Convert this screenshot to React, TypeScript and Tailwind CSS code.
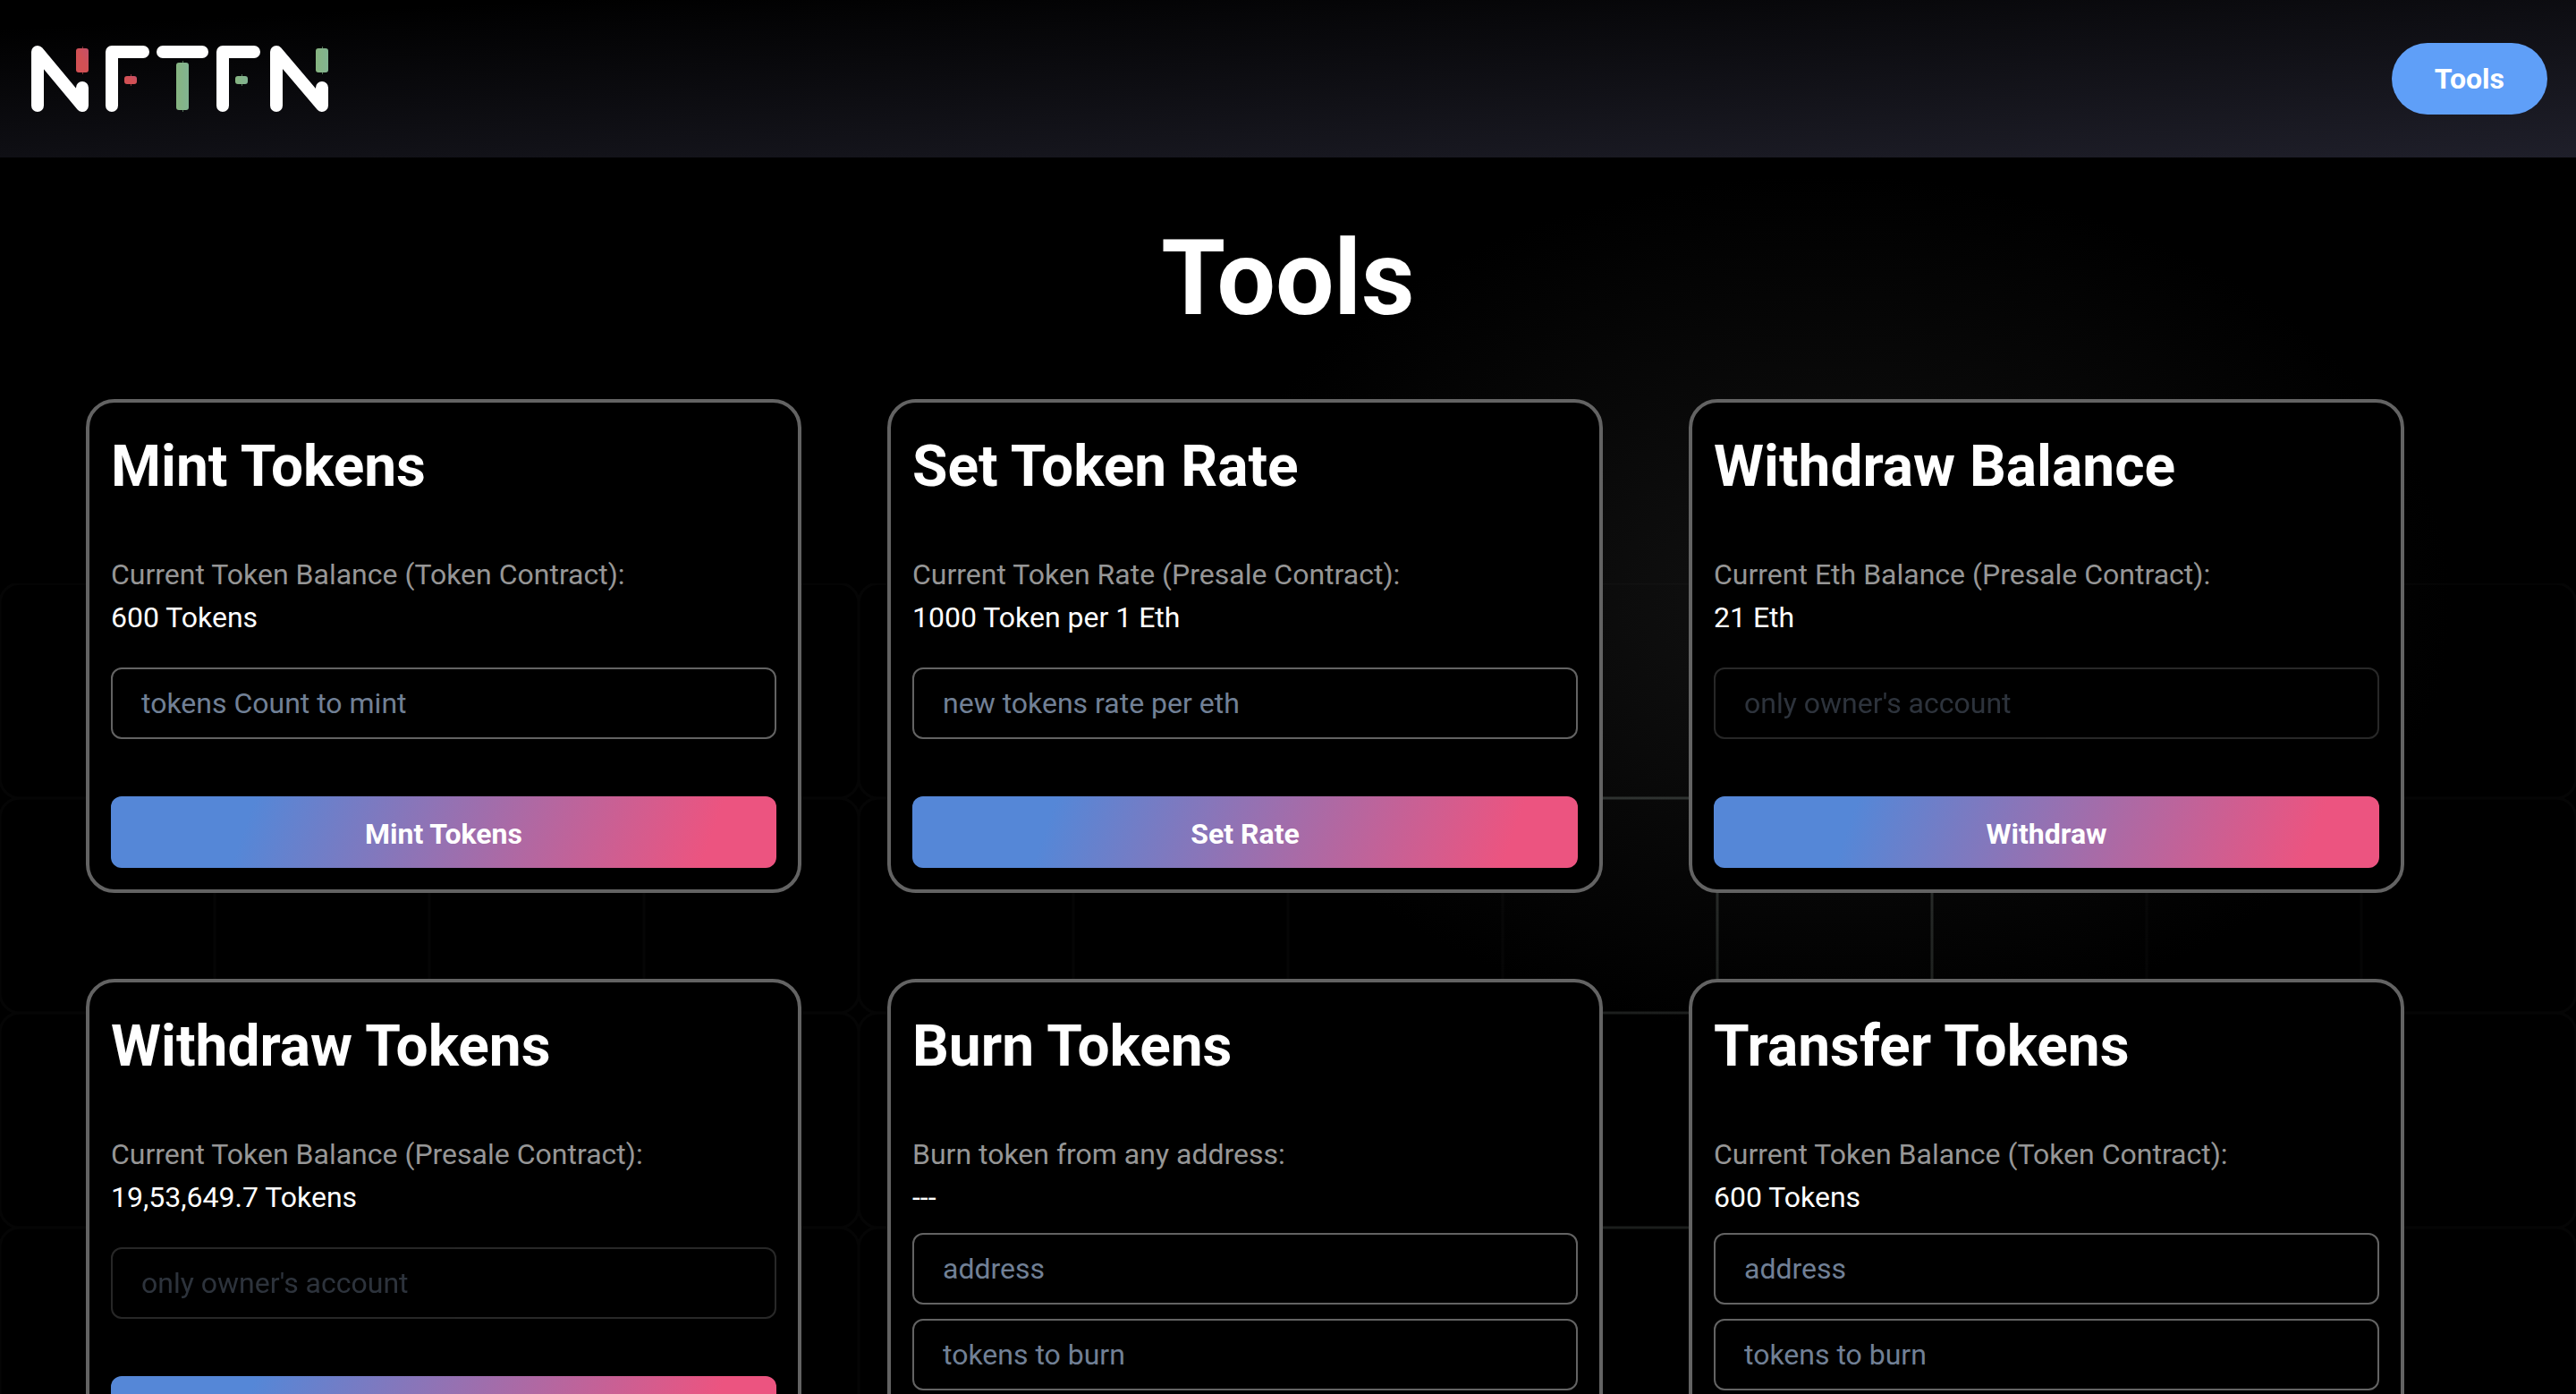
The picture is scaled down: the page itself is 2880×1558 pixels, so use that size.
import type { ReactNode } from "react";

type Field = { id: string; placeholder: string; disabled?: boolean };
type Tool = {
  title: string;
  label: string;
  value: string;
  fields: Field[];
  action: string;
};

const tools: Tool[] = [
  {
    title: "Mint Tokens",
    label: "Current Token Balance (Token Contract):",
    value: "600 Tokens",
    fields: [{ id: "mint-count", placeholder: "tokens Count to mint" }],
    action: "Mint Tokens",
  },
  {
    title: "Set Token Rate",
    label: "Current Token Rate (Presale Contract):",
    value: "1000 Token per 1 Eth",
    fields: [{ id: "token-rate", placeholder: "new tokens rate per eth" }],
    action: "Set Rate",
  },
  {
    title: "Withdraw Balance",
    label: "Current Eth Balance (Presale Contract):",
    value: "21 Eth",
    fields: [{ id: "withdraw-balance", placeholder: "only owner's account", disabled: true }],
    action: "Withdraw",
  },
  {
    title: "Withdraw Tokens",
    label: "Current Token Balance (Presale Contract):",
    value: "19,53,649.7 Tokens",
    fields: [{ id: "withdraw-tokens", placeholder: "only owner's account", disabled: true }],
    action: "Withdraw",
  },
  {
    title: "Burn Tokens",
    label: "Burn token from any address:",
    value: "---",
    fields: [
      { id: "burn-address", placeholder: "address" },
      { id: "burn-count", placeholder: "tokens to burn" },
    ],
    action: "Burn",
  },
  {
    title: "Transfer Tokens",
    label: "Current Token Balance (Token Contract):",
    value: "600 Tokens",
    fields: [
      { id: "transfer-address", placeholder: "address" },
      { id: "transfer-count", placeholder: "tokens to burn" },
    ],
    action: "Transfer",
  },
];

function Candle({ x, y, h, color }: { x: number; y: number; h: number; color: string }) {
  return (
    <g fill={color}>
      <rect x={x} y={y} width="14" height={h} rx="3" />
      <rect x={x + 7} y={y - 2} width="1" height={h + 4} opacity="0.6" />
    </g>
  );
}

function Logo() {
  return (
    <svg viewBox="32 50 336 76" className="h-[76px] w-[336px]" role="img" aria-label="NFTFN">
      <defs>
        <linearGradient id="red" x1="0" y1="1" x2="1" y2="0">
          <stop offset="0.5" stopColor="#d25054" />
          <stop offset="1" stopColor="#c4506a" />
        </linearGradient>
        <linearGradient id="green" x1="0" y1="0" x2="1" y2="0">
          <stop offset="0" stopColor="#86b480" />
          <stop offset="1" stopColor="#82b392" />
        </linearGradient>
      </defs>
      <g fill="none" stroke="#fff" strokeWidth="14" strokeLinecap="round" strokeLinejoin="round">
        <path d="M42 118V58L92 118V98" />
        <path d="M160 58H125V118" />
        <path d="M182 58H226" />
        <path d="M284 58H249V118" />
        <path d="M309 118V58L360 118V98" />
      </g>
      <Candle x={85} y={54} h={27} color="url(#red)" />
      <Candle x={139} y={85} h={9} color="url(#red)" />
      <Candle x={197} y={70} h={53} color="url(#green)" />
      <Candle x={263} y={85} h={9} color="url(#green)" />
      <Candle x={353} y={54} h={27} color="url(#green)" />
    </svg>
  );
}

function Backdrop({ children }: { children: ReactNode }) {
  return (
    <div className="relative isolate flex-1 overflow-hidden bg-black bg-[radial-gradient(ellipse_700px_480px_at_2040px_500px,#121212_0%,#0a0a0a_45%,#000000_100%)]">
      <svg className="absolute inset-0 -z-10 h-full w-full" aria-hidden="true">
        <defs>
          <pattern id="cells" width="240" height="240" y="-4" patternUnits="userSpaceOnUse">
            <rect width="240" height="240" rx="22" fill="none" stroke="#fff" strokeWidth="3" />
          </pattern>
          <pattern id="lines" width="240" height="240" y="-4" patternUnits="userSpaceOnUse">
            <path d="M0 0H240V240H0Z" fill="none" stroke="#d8f0e0" strokeWidth="3" />
          </pattern>
          <linearGradient id="fade" x1="0" y1="0" x2="0" y2="1">
            <stop offset="0" stopColor="#fff" stopOpacity="0.17" />
            <stop offset="0.25" stopColor="#fff" stopOpacity="0.11" />
            <stop offset="1" stopColor="#fff" stopOpacity="0.1" />
          </linearGradient>
          <mask id="glow">
            <rect x="1760" y="712" width="480" height="900" fill="url(#fade)" />
          </mask>
        </defs>
        <rect y="476" width="100%" height="100%" fill="url(#cells)" opacity="0.02" />
        <rect x="1760" y="712" width="480" height="900" fill="url(#lines)" mask="url(#glow)" />
      </svg>
      {children}
    </div>
  );
}

function ToolCard({ tool }: { tool: Tool }) {
  return (
    <form
      className="rounded-[32px] border-4 border-[#636363] bg-black p-6"
      onSubmit={(event) => event.preventDefault()}
    >
      <h2 className="mb-12 text-[64px] leading-[96px] font-bold">{tool.title}</h2>
      <p className="leading-12 text-[#969696]">{tool.label}</p>
      <p className="leading-12">{tool.value}</p>
      <div className={tool.fields.length > 1 ? "mt-4 mb-16 grid gap-4" : "mt-8 mb-16 grid gap-4"}>
        {tool.fields.map((field) => (
          <input
            key={field.id}
            id={field.id}
            aria-label={field.placeholder}
            placeholder={field.placeholder}
            disabled={field.disabled}
            className="h-20 w-full rounded-xl border-2 border-[#636363] bg-transparent px-8 placeholder:text-[#718096] disabled:opacity-40"
          />
        ))}
      </div>
      <button
        type="submit"
        className="h-20 w-full rounded-xl bg-[linear-gradient(109.6deg,#5587d7_21%,#ec5480_89%)] pt-1 font-bold"
      >
        {tool.action}
      </button>
    </form>
  );
}

export default function App() {
  return (
    <div className="flex min-h-screen flex-col bg-black font-[Roboto,sans-serif] text-[32px] text-white">
      <header className="flex h-44 items-center justify-between bg-[linear-gradient(177deg,#000000_10%,#1f1f2a_100%)] px-8">
        <a href="#home">
          <Logo />
        </a>
        <a
          href="#tools"
          className="flex h-20 items-center rounded-full bg-[#5f9ff8] px-12 font-bold"
        >
          Tools
        </a>
      </header>
      <Backdrop>
        <main>
          <h1 className="pt-16 pb-16 text-center text-[116px] leading-[142px] font-bold">Tools</h1>
          <div className="grid grid-cols-3 gap-24 pr-48 pb-24 pl-24">
            {tools.map((tool) => (
              <ToolCard key={tool.title} tool={tool} />
            ))}
          </div>
        </main>
      </Backdrop>
    </div>
  );
}
